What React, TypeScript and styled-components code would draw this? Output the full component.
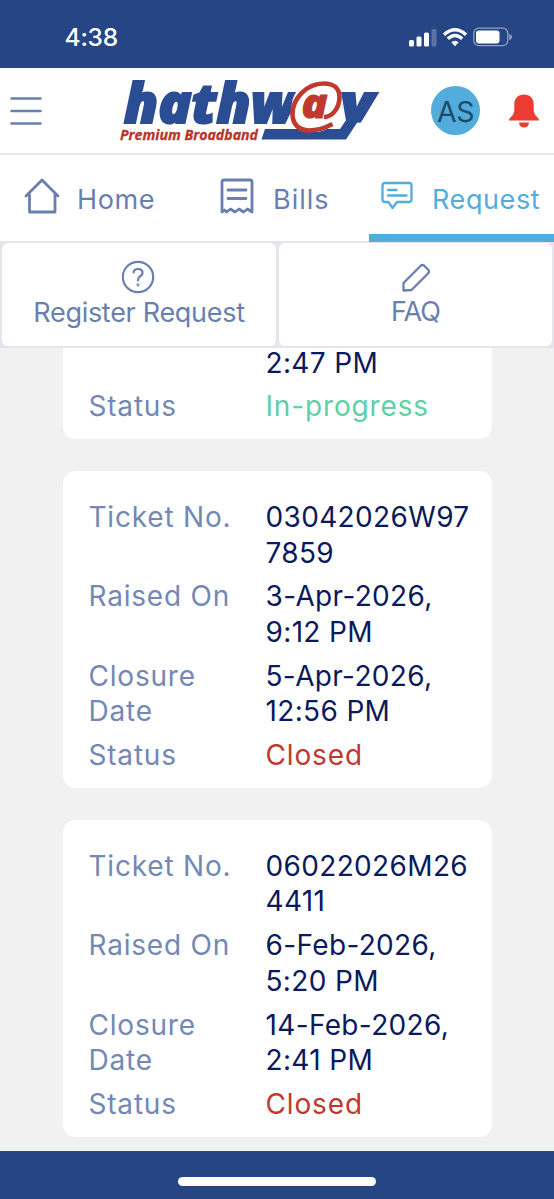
import React from 'react';
import styled, { createGlobalStyle } from 'styled-components';

const GlobalStyle = createGlobalStyle`
  * { box-sizing: border-box; }
  body { margin: 0; background: #f1f1f1; font-family: Inter, Roboto, "Liberation Sans", sans-serif; }
`;

const Screen = styled.div`
  width: 554px;
  height: 1199px;
  display: flex;
  flex-direction: column;
  overflow: hidden;
`;

const StatusBar = styled.div`
  flex: none;
  height: 67.5px;
  padding: 7px 41px 0 64.5px;
  display: flex;
  align-items: center;
  justify-content: space-between;
  background: #254585;
`;

const Clock = styled.span`
  font: 500 24.5px/30px Inter, sans-serif;
  letter-spacing: -0.2px;
  color: #fff;
`;

const Header = styled.header`
  flex: none;
  height: 87.5px;
  display: flex;
  align-items: center;
  padding: 0 14px 0 10px;
  border-bottom: 2px solid #e6e7ea;
  background: #fff;
`;

const MenuButton = styled.button`
  width: 32px;
  height: 32px;
  padding: 0;
  border: 0;
  background: none;
  svg { display: block; margin-top: 1px; }
`;

const Brand = styled.div`
  margin-left: 76px;
  height: 70px;
  svg { display: block; overflow: visible; }
`;

const Avatar = styled.div`
  width: 49px;
  height: 49px;
  margin-left: 51px;
  border-radius: 50%;
  background: #52acdc;
  color: #1d4c69;
  font-size: 28.5px;
  line-height: 51px;
  letter-spacing: -0.5px;
  text-align: center;
`;

const BellIcon = styled.svg`
  margin: 2px 0 0 auto;
`;

const Tabs = styled.nav`
  flex: none;
  height: 87px;
  display: flex;
  background: #fff;
`;

const Tab = styled.a<{ $width: number; $pad: number; $gap: number; $active?: boolean }>`
  width: ${p => p.$width}px;
  padding-left: ${p => p.$pad}px;
  padding-top: ${p => (p.$active ? 11 : 4)}px;
  display: flex;
  align-items: center;
  gap: ${p => p.$gap}px;
  white-space: nowrap;
  color: ${p => (p.$active ? '#52acdc' : '#697fb0')};
  border-bottom: ${p => (p.$active ? '8px solid #52acdc' : '1px solid #e2e4ec')};
  svg { flex: none; margin-bottom: 9px; }
`;

const Caption = styled.span<{ $spacing?: number }>`
  font-size: 27px;
  line-height: 36px;
  letter-spacing: ${p => p.$spacing ?? 0.6}px;
`;

const Actions = styled.div`
  flex: none;
  height: 105.5px;
  display: grid;
  grid-template-columns: 274px 273px;
  gap: 3px;
  padding: 1px 2px 2px;
  background: #e5e6ed;
`;

const Action = styled.button<{ $drop?: number }>`
  display: flex;
  flex-direction: column;
  align-items: center;
  padding: ${p => 17 + (p.$drop ?? 0)}px 0 0;
  border: 0;
  border-radius: 6px;
  background: #fff;
  color: #697fb0;
  font-family: inherit;
  svg { margin-bottom: 1px; }
`;

const TicketList = styled.main`
  flex: 1;
  min-height: 0;
  display: flex;
  flex-direction: column;
  justify-content: flex-end;
  gap: 32px;
  padding: 0 62.5px 14px;
  overflow: hidden;
  background: #f1f1f1;
`;

const Card = styled.section`
  flex: none;
  display: flex;
  flex-direction: column;
  gap: 8.2px;
  padding: 29px 0 14px 26px;
  border-radius: 13px;
  background: #fff;
`;

const Row = styled.div`
  display: grid;
  grid-template-columns: 177px 1fr;
  font-size: 28px;
  line-height: 35.6px;
  white-space: pre;
`;

const Label = styled.span`
  color: #7488b5;
  letter-spacing: 0.8px;
`;

const Value = styled.span<{ $color?: string }>`
  color: ${p => p.$color ?? '#0a1a5c'};
  letter-spacing: ${p => (p.$color ? 0.85 : 0.35)}px;
`;

const HomeBar = styled.footer`
  flex: none;
  height: 48.5px;
  display: flex;
  justify-content: center;
  padding-top: 26px;
  background: #254585;
`;

const HomeIndicator = styled.div`
  width: 198px;
  height: 9px;
  border-radius: 5px;
  background: #fff;
`;

const SignalIcons = () => (
  <svg width="104" height="24" viewBox="0 0 104 24" fill="#fff">
    <rect x="0" y="15" width="5" height="6.5" rx="1.5" />
    <rect x="7.5" y="11.5" width="5" height="10" rx="1.5" />
    <rect x="15" y="7.5" width="5" height="14" rx="1.5" />
    <rect x="22.5" y="4" width="5" height="17.5" rx="1.5" opacity=".25" />
    <g fill="none" stroke="#fff" strokeWidth="3.3">
      <path d="M35 9.7Q46 -.3 57 9.7" />
      <path d="M38.8 13.8Q46 7.2 53.2 13.8" />
    </g>
    <path d="M42.3 17.2Q46 14.2 49.7 17.2L46 21.3Z" />
    <rect x="64.8" y="3.2" width="34" height="17.4" rx="5" fill="none" stroke="#fff" strokeWidth="1.3" opacity=".5" />
    <rect x="67" y="5.4" width="23.5" height="13" rx="2.8" />
    <path d="M100.3 8.7Q103 9.400 103 11.9T100.3 15.1Z" opacity=".5" />
  </svg>
);

const Logo = () => (
  <svg width="262" height="70" viewBox="0 0 262 70" fontFamily="'Open Sans', 'Noto Sans', sans-serif" fontStyle="italic">
    <defs>
      <clipPath id="aboveBar"><rect x="215" y="0" width="50" height="47.500" /></clipPath>
    </defs>
    <path d="M147 54H222L227.500 46H240.200L228 64.500H143.500Z" fill="#2b4d93" />
    <g fill="#2b4d93" stroke="#2b4d93" strokeWidth="2" fontWeight="800">
      <text x="6" y="48" fontSize="54" textLength="172" lengthAdjust="spacingAndGlyphs">hathw</text>
      <g clipPath="url(#aboveBar)">
        <text x="222" y="48" fontSize="54" textLength="34" lengthAdjust="spacingAndGlyphs">y</text>
      </g>
    </g>
    <ellipse cx="197.500" cy="32" rx="24" ry="25" fill="#fff" />
    <path d="M206 42C215 42 221.500 32 221.500 22C221.500 13 215 8.500 206 8.500C188 8.500 174.500 24 174.500 39C174.500 49 181 55.500 191 55.500C199 55.500 207 53 214.500 49" fill="none" stroke="#c0392f" strokeWidth="4.600" />
    <text x="183.500" y="42.500" fontSize="41" fontWeight="800" fill="#c0392f" stroke="#c0392f" strokeWidth="1" textLength="26" lengthAdjust="spacingAndGlyphs">a</text>
    <text x="2" y="64.500" fontSize="14.500" fontWeight="700" fill="#b8352c" stroke="#b8352c" strokeWidth=".3" textLength="138" lengthAdjust="spacingAndGlyphs">Premium Broadband</text>
  </svg>
);

const HomeIcon = () => (
  <svg width="36" height="38" viewBox="0 0 36 38" fill="none" stroke="currentColor" strokeWidth="2.8" strokeLinejoin="round" strokeLinecap="round">
    <path d="M2 19L18 3L34 19M5.500 18V35H31V18" />
  </svg>
);

const BillIcon = () => (
  <svg width="34" height="36" viewBox="0 0 34 36" fill="none" stroke="currentColor" strokeWidth="2.8" strokeLinejoin="round" strokeLinecap="round">
    <path d="M2 34V4Q2 2 4 2H30Q32 2 32 4V34L27.500 31L23.500 34L19 31L15 34L10.500 31L6.500 34L4.500 32Z" />
    <path d="M8 12H26M8 20.500H26" />
  </svg>
);

const ChatIcon = () => (
  <svg width="32" height="30" viewBox="0 0 32 30" fill="none" stroke="currentColor" strokeWidth="2.3" strokeLinejoin="round" strokeLinecap="round">
    <path d="M4 2H28Q30.500 2 30.500 4.500V18.500Q30.500 21 28 21H16L11.500 27L7.500 21H4Q1.500 21 1.500 18.500V4.500Q1.500 2 4 2Z" />
    <path d="M7 9H15.500M7 14.500H25.500" />
  </svg>
);

const QuestionIcon = () => (
  <svg width="34" height="34" viewBox="0 0 34 34" fill="none" stroke="currentColor" strokeWidth="2.2" strokeLinecap="round">
    <circle cx="16" cy="17" r="15.200" />
    <path d="M11.500 12.500Q12 9 16 9Q20.500 9 20.500 12.700Q20.500 15 17.800 16.500Q16 17.500 16 20.500" />
    <circle cx="16" cy="24.800" r=".5" />
  </svg>
);

const PencilIcon = () => (
  <svg width="30" height="30" viewBox="0 0 30 30" fill="none" stroke="currentColor" strokeWidth="2.3" strokeLinejoin="round">
    <path d="M2.500 27.500V20L19.500 3Q21.500 1 23.500 3L27 6.500Q29 8.500 27 10.500L10.500 27Z" />
  </svg>
);

type Field = { label: string; value: string; color?: string };

const tickets: Field[][] = [
  [
    { label: '', value: '2:47 PM' },
    { label: 'Status', value: 'In-progress', color: '#62cfa4' },
  ],
  [
    { label: 'Ticket No.', value: '03042026W97\n7859' },
    { label: 'Raised On', value: '3-Apr-2026,\n9:12 PM' },
    { label: 'Closure\nDate', value: '5-Apr-2026,\n12:56 PM' },
    { label: 'Status', value: 'Closed', color: '#c0392f' },
  ],
  [
    { label: 'Ticket No.', value: '06022026M26\n4411' },
    { label: 'Raised On', value: '6-Feb-2026,\n5:20 PM' },
    { label: 'Closure\nDate', value: '14-Feb-2026,\n2:41 PM' },
    { label: 'Status', value: 'Closed', color: '#c0392f' },
  ],
];

export default function App() {
  return (
    <Screen>
      <GlobalStyle />
      <StatusBar>
        <Clock>4:38</Clock>
        <SignalIcons />
      </StatusBar>
      <Header>
        <MenuButton aria-label="Menu">
          <svg width="32" height="32" viewBox="0 0 32 32" stroke="#697fb0" strokeWidth="2.6" strokeLinecap="round">
            <path d="M1.500 3.500H30.500M1.500 16H30.500M1.500 28.500H30.500" />
          </svg>
        </MenuButton>
        <Brand><Logo /></Brand>
        <Avatar>AS</Avatar>
        <BellIcon width="32" height="34" viewBox="0 0 32 34" fill="#ec3c32">
          <path d="M16 .5C22 .5 25.700 4.500 25.700 10.500V16Q25.700 20 29.500 23.500Q31.500 25.500 31 26.500H1Q.5 25.500 2.500 23.500Q6.300 20 6.300 16V10.500C6.300 4.500 10 .5 16 .5Z" />
          <path d="M11 28.500H21Q20.500 33.500 16 33.500T11 28.500Z" />
        </BellIcon>
      </Header>
      <Tabs>
        <Tab $width={190} $pad={24} $gap={17}><HomeIcon /><Caption>Home</Caption></Tab>
        <Tab $width={179} $pad={30} $gap={19}><BillIcon /><Caption $spacing={1}>Bills</Caption></Tab>
        <Tab $width={185} $pad={12} $gap={19} $active><ChatIcon /><Caption>Request</Caption></Tab>
      </Tabs>
      <Actions>
        <Action><QuestionIcon /><Caption $spacing={-0.3}>Register Request</Caption></Action>
        <Action $drop={3}><PencilIcon /><Caption $spacing={-0.9}>FAQ</Caption></Action>
      </Actions>
      <TicketList>
        {tickets.map((fields, i) => (
          <Card key={i}>
            {fields.map(f => (
              <Row key={f.label}>
                <Label>{f.label}</Label>
                <Value $color={f.color}>{f.value}</Value>
              </Row>
            ))}
          </Card>
        ))}
      </TicketList>
      <HomeBar><HomeIndicator /></HomeBar>
    </Screen>
  );
}
